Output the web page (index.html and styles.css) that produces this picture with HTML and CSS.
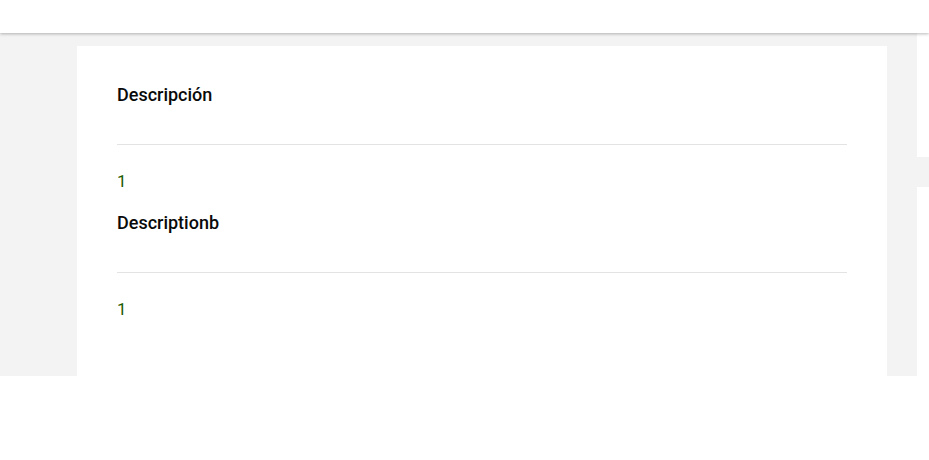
FILE: index.html
```html
<!DOCTYPE html>
<html lang="es">
<head>
    <meta charset="UTF-8">
    <meta name="viewport" content="width=device-width, initial-scale=1.0">
    <title>Descripción</title>
    <link rel="stylesheet" href="styles.css">
</head>
<body>

<header class="top-bar"></header>

<div class="page">
    <main class="content">
        <div class="card">
            <div class="field">
                <h3 class="field-title">Descripción</h3>
                <div class="field-value">1</div>
            </div>
            <div class="field">
                <h3 class="field-title">Descriptionb</h3>
                <div class="field-value">1</div>
            </div>
        </div>
    </main>
    <aside class="side-strip">
        <div class="side-tab"></div>
    </aside>
</div>

</body>
</html>
```

FILE: styles.css
```css
body {
    font-family: Roboto, "Noto Sans", Arial, sans-serif;
    margin: 0;
    padding: 0;
    background: #fff;
    color: #111;
}
.top-bar {
    position: relative;
    z-index: 1;
    height: 33px;
    background: #fff;
    box-shadow: 0 1px 3px rgba(0, 0, 0, 0.28);
}
.page {
    display: flex;
    height: 343px;
}
.content {
    width: 917px;
    background: #f3f3f3;
    padding: 13px 30px 0 77px;
    box-sizing: border-box;
    display: flex;
}
.card {
    flex: 1;
    background: #fff;
    padding: 37px 40px 0;
}
.field + .field {
    margin-top: 18px;
}
.field-title {
    margin: 0;
    font-size: 18px;
    font-weight: 500;
    line-height: 24px;
    padding-bottom: 37px;
    border-bottom: 1px solid #e3e3e3;
    color: #0a0a0a;
}
.field-value {
    margin-top: 24px;
    font-size: 17px;
    line-height: 24px;
    color: #1a5c00;
}
.side-strip {
    flex: 1;
    background: #fff;
    padding-top: 124px;
}
.side-tab {
    height: 30px;
    background: #f3f3f3;
}
```
